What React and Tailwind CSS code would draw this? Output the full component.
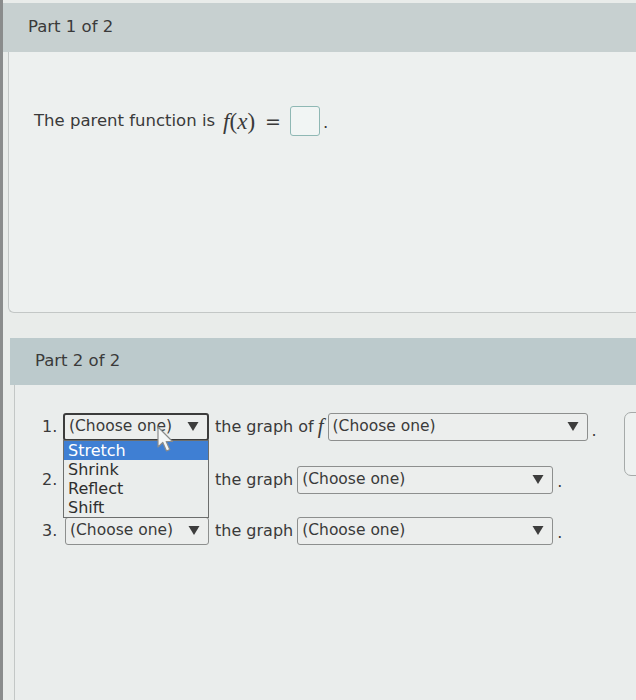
const sans = "font-['DejaVu_Sans',sans-serif]";

function Arrow() {
  return (
    <svg width="12" height="11" viewBox="0 0 12 11" className="shrink-0">
      <path d="M0.5 1 L11.5 1 L6 10 Z" fill="#3d3d3d" />
    </svg>
  );
}

function Select({ w, focused }) {
  return (
    <div
      className={`flex h-[28px] items-center justify-between rounded-[3px] bg-[#eceeed] pl-[4px] pr-[8px] text-[15.5px] text-[#3a3a3a] ${
        focused ? "border-2 border-[#3c3c3c]" : "border border-[#8d8f8e]"
      }`}
      style={{ width: w }}
    >
      <span>(Choose one)</span>
      <Arrow />
    </div>
  );
}

function Cursor() {
  return (
    <svg width="17" height="28" viewBox="0 0 17 28" className="pointer-events-none absolute left-[94px] top-[13px] z-20">
      <path d="M1 1 L1 21 L5.8 16.5 L9.5 25 L12.8 23.5 L9.2 15.5 L15.5 15.5 Z" fill="#f4f6f6" stroke="#8a8c8c" strokeWidth="1.2" strokeLinejoin="round" />
    </svg>
  );
}

function Dropdown() {
  const items = ["Stretch", "Shrink", "Reflect", "Shift"];
  return (
    <div className="absolute left-0 top-[27px] z-10 w-[146px] border border-[#6c6e6d] bg-[#eaedec] text-[16px] leading-[19px] text-[#2f2f2f]">
      {items.map((it, i) => (
        <div key={it} className={`h-[19px] pl-[4px] ${i === 0 ? "bg-[#3f7fd3] text-white" : ""}`}>
          {it}
        </div>
      ))}
    </div>
  );
}

export default function App() {
  return (
    <div className={`h-[700px] w-[636px] overflow-hidden border-l-[3px] border-[#8a8c8c] bg-[#e9ecea] pt-[3px] ${sans} text-[#3a3a3a]`}>
      <div className="flex h-[49px] items-center bg-[#c7d0d0] pl-[25px] text-[16.5px]">Part 1 of 2</div>

      <div className="ml-[5px] h-[261px] rounded-bl-[6px] border-b border-l border-[#c3c7c6] bg-[#edf0ef] pl-[25px] pt-[54px]">
        <div className="flex items-center text-[16.5px]">
          <span>The parent function is</span>
          <span className="ml-[8px] font-['Liberation_Serif',serif] text-[23px] leading-none">
            <i>f</i>(<i>x</i>)
          </span>
          <span className="ml-[10px] text-[19px]">=</span>
          <span className="ml-[9px] h-[30px] w-[30px] rounded-[3px] border-[1.5px] border-[#8fb8b4] bg-[#f1f5f4]" />
          <span className="ml-[3px] self-end">.</span>
        </div>
      </div>

      <div className="h-[25px]" />

      <div className="ml-[7px] flex h-[47px] items-center bg-[#bccacc] pl-[25px] text-[16.5px]">Part 2 of 2</div>

      <div className="ml-[11px] flex h-[400px] border-l border-[#c3c7c6] bg-[#eaedec]">
        <div className="flex flex-1 flex-col gap-[23px] pl-[27px] pt-[26px] text-[16px]">
          <div className="flex items-center">
            <span className="w-[21px]">1.</span>
            <div className="relative">
              <Select w={146} focused />
              <Cursor />
              <Dropdown />
            </div>
            <span className="ml-[6px]">the graph of</span>
            <span className="ml-[4px] mr-[4px] font-['Liberation_Serif',serif] text-[21px] italic">f</span>
            <Select w={260} />
            <span className="ml-[4px] self-end">.</span>
          </div>

          <div className="flex items-center">
            <span className="w-[21px]">2.</span>
            <div className="h-[28px] w-[146px]" />
            <span className="ml-[6px] mr-[4px]">the graph</span>
            <Select w={256} />
            <span className="ml-[4px] self-end">.</span>
          </div>

          <div className="flex items-center">
            <span className="w-[21px]">3.</span>
            <div className="ml-[2px]">
              <Select w={144} />
            </div>
            <span className="ml-[6px] mr-[4px]">the graph</span>
            <Select w={256} />
            <span className="ml-[4px] self-end">.</span>
          </div>
        </div>

        <div className="-mr-[14px] mt-[27px] h-[64px] w-[26px] shrink-0 rounded-[7px] border-[1.5px] border-[#a6aaa9] bg-[#eef1f0]" />
      </div>
    </div>
  );
}
